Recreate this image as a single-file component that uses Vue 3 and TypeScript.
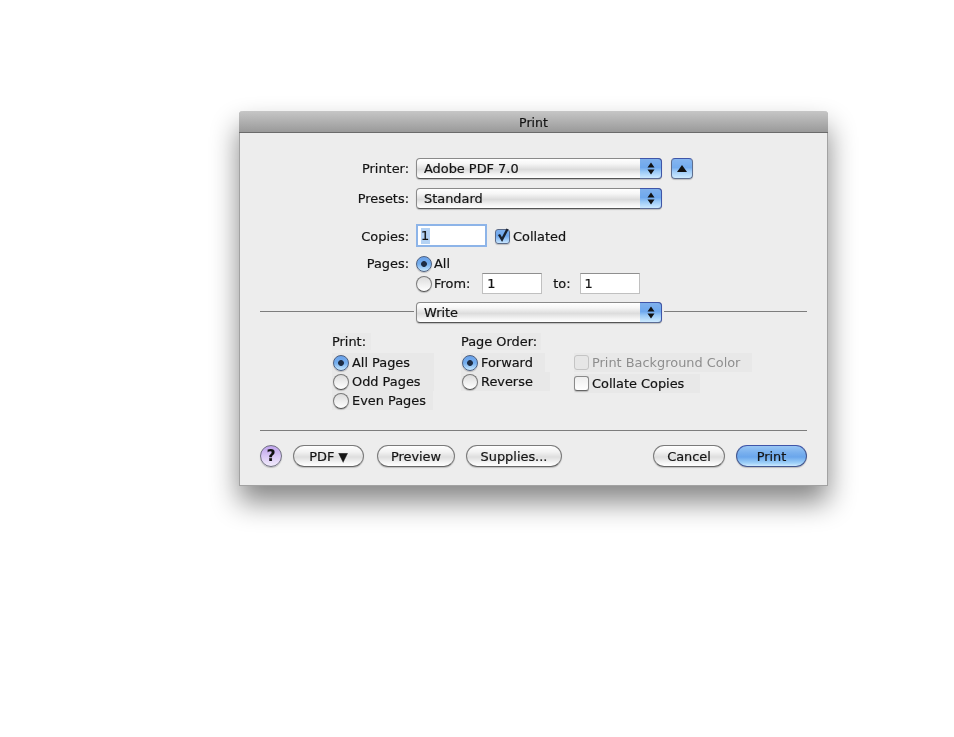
<script setup lang="ts">
const printOptions = [
  { label: 'All Pages', checked: true, width: 102 },
  { label: 'Odd Pages', checked: false, width: 102 },
  { label: 'Even Pages', checked: false, width: 101 },
]
const orderOptions = [
  { label: 'Forward', checked: true, width: 84 },
  { label: 'Reverse', checked: false, width: 89 },
]
</script>

<template>
  <div class="page">
    <div class="window">
      <div class="inner">
        <div class="titlebar">Print</div>
        <div class="body">
          <div class="form">
            <div class="row printer-row">
              <span class="label">Printer:</span>
              <div class="select">
                <span class="select-text">Adobe PDF 7.0</span>
                <span class="stepper">
                  <svg width="8" height="13" viewBox="0 0 8 13"><path d="M4 .5 7.500 5.500H.5zM.5 7.500h7L4 12.500z" fill="#111" /></svg>
                </span>
              </div>
              <span class="disclosure">
                <svg width="10" height="7" viewBox="0 0 10 7"><path d="M5 0 10 7H0z" fill="#111" /></svg>
              </span>
            </div>
            <div class="row presets-row">
              <span class="label">Presets:</span>
              <div class="select">
                <span class="select-text">Standard</span>
                <span class="stepper">
                  <svg width="8" height="13" viewBox="0 0 8 13"><path d="M4 .5 7.500 5.500H.5zM.5 7.500h7L4 12.500z" fill="#111" /></svg>
                </span>
              </div>
            </div>
            <div class="row copies-row">
              <span class="label">Copies:</span>
              <div class="focus-input"><span class="selected-text">1</span></div>
              <span class="checkbox checked">
                <svg width="15" height="15" viewBox="0 0 15 15"><path d="M4 6.500 7 11.500 12.500 1" fill="none" stroke="#1a2230" stroke-width="2.400" /></svg>
              </span>
              <span class="text collated">Collated</span>
            </div>
            <div class="row pages-row">
              <span class="label">Pages:</span>
              <span class="radio on"></span>
              <span class="text">All</span>
            </div>
            <div class="row from-row">
              <span class="label"></span>
              <span class="radio"></span>
              <span class="text">From:</span>
              <div class="num-input first">1</div>
              <span class="text to">to:</span>
              <div class="num-input">1</div>
            </div>
          </div>

          <div class="split-row">
            <span class="rule rule-left"></span>
            <div class="select">
              <span class="select-text">Write</span>
              <span class="stepper">
                <svg width="8" height="13" viewBox="0 0 8 13"><path d="M4 .5 7.500 5.500H.5zM.5 7.500h7L4 12.500z" fill="#111" /></svg>
              </span>
            </div>
            <span class="rule rule-right"></span>
          </div>

          <div class="options">
            <div class="col col-print">
              <div class="heading heading-print">Print:</div>
              <div v-for="o in printOptions" :key="o.label" class="opt" :style="{ width: o.width + 'px' }">
                <span class="radio" :class="{ on: o.checked }"></span>
                <span class="text">{{ o.label }}</span>
              </div>
            </div>
            <div class="col col-order">
              <div class="heading heading-order">Page Order:</div>
              <div v-for="o in orderOptions" :key="o.label" class="opt" :style="{ width: o.width + 'px' }">
                <span class="radio" :class="{ on: o.checked }"></span>
                <span class="text">{{ o.label }}</span>
              </div>
            </div>
            <div class="col col-check">
              <div class="opt check-opt disabled">
                <span class="checkbox plain"></span>
                <span class="text">Print Background Color</span>
              </div>
              <div class="opt check-opt second">
                <span class="checkbox plain"></span>
                <span class="text">Collate Copies</span>
              </div>
            </div>
          </div>

          <div class="rule bottom-rule"></div>

          <div class="buttons">
            <span class="help">?</span>
            <button class="btn pdf">PDF <span class="tri">▼</span></button>
            <button class="btn preview">Preview</button>
            <button class="btn supplies">Supplies...</button>
            <span class="spacer"></span>
            <button class="btn cancel">Cancel</button>
            <button class="btn print">Print</button>
          </div>
        </div>
      </div>
    </div>
  </div>
</template>

<style scoped>
.page {
  box-sizing: border-box;
  height: 737px;
  padding: 111px 0 0 239px;
}
.window {
  box-sizing: border-box;
  width: 589px;
  height: 375px;
  border-radius: 4px 4px 0 0;
  background: #ededed;
  box-shadow: 0 16px 28px rgba(0, 0, 0, .48);
}
.inner {
  box-sizing: border-box;
  height: 100%;
  border: 1px solid #a2a2a2;
  border-top: none;
  border-radius: 4px 4px 0 0;
  font-family: "DejaVu Sans", sans-serif;
  font-size: 12.900px;
  color: #141414;
  -webkit-text-stroke: .2px #141414;
  filter: blur(.45px);
}
.titlebar {
  box-sizing: border-box;
  height: 22px;
  line-height: 23px;
  margin: 0 -1px;
  text-align: center;
  font-size: 12.500px;
  border-radius: 4px 4px 0 0;
  border-bottom: 1px solid #6b6b6b;
  background: linear-gradient(#c6c6c6, #9a9a9a);
}
.body {
  padding: 25px 20px 0;
}
.form {
  margin-left: -20px;
}
.row {
  display: flex;
  align-items: center;
}
.label {
  width: 169px;
  margin-right: 7px;
  text-align: right;
  flex: none;
}
.printer-row { height: 21px; }
.presets-row { height: 21px; margin-top: 9px; }
.copies-row { height: 23px; margin-top: 15px; }
.copies-row .label, .collated { padding-top: 2px; }
.pages-row { height: 17px; margin-top: 8px; }
.from-row { height: 21px; margin-top: 1px; }
.select {
  box-sizing: border-box;
  flex: none;
  width: 246px;
  height: 21px;
  display: flex;
  align-items: center;
  border: 1px solid #8a8a8a;
  border-bottom-color: #555;
  border-radius: 4px;
  box-shadow: 0 1px 1px rgba(0, 0, 0, .2);
  background: linear-gradient(#fff 0, #f6f6f6 25%, #dcdcdc 55%, #f2f2f2 80%, #fff 100%);
}
.select-text {
  flex: 1;
  padding-left: 7px;
}
.stepper {
  box-sizing: border-box;
  width: 22px;
  height: 21px;
  margin: -1px -1px -1px 0;
  border: 1px solid #3f55a8;
  border-left: none;
  border-bottom-color: #5b6c94;
  border-radius: 0 4px 4px 0;
  display: flex;
  align-items: center;
  justify-content: center;
  background: linear-gradient(#7fb0ec 0, #6ea8ee 45%, #98c8f6 65%, #cdeaff 100%);
}
.disclosure {
  box-sizing: border-box;
  width: 22px;
  height: 21px;
  margin-left: 9px;
  border: 1px solid #5f6f8f;
  border-top-color: #3f55a8;
  border-radius: 4px;
  box-shadow: 0 1px 1px rgba(0, 0, 0, .2);
  display: flex;
  align-items: center;
  justify-content: center;
  background: linear-gradient(#86b6f0 0, #74acee 45%, #a0ccf8 65%, #cdeaff 100%);
}
.focus-input {
  box-sizing: border-box;
  width: 71px;
  height: 23px;
  padding: 2px 0 0 3px;
  background: #fff;
  border: 2px solid #8db4e8;
  line-height: 16px;
}
.selected-text {
  display: inline-block;
  width: 9px;
  background: #b4d2f4;
}
.checkbox {
  box-sizing: border-box;
  flex: none;
  width: 15px;
  height: 15px;
  border: 1px solid #8a8a8a;
  border-bottom-color: #666;
  border-radius: 3px;
  box-shadow: 0 1px 1px rgba(0, 0, 0, .2);
  background: linear-gradient(#eeeeee, #fff);
  display: inline-block;
}
.checkbox.checked {
  margin: 1px 0 0 8px;
  background: linear-gradient(#7fb0ec, #6ea8ee 45%, #c8e6fe);
  border-color: #5a6a88;
}
.checkbox svg {
  display: block;
  margin: -2px 0 0 -1px;
}
.text {
  white-space: nowrap;
}
.collated { margin-left: 3px; }
.radio {
  box-sizing: border-box;
  flex: none;
  width: 16px;
  height: 16px;
  border-radius: 50%;
  border: 1px solid #7a7a7a;
  border-bottom-color: #555;
  box-shadow: 0 1px 1px rgba(0, 0, 0, .2);
  background: linear-gradient(#dcdcdc, #fff);
  margin-right: 3px;
}
.row .radio { margin-right: 2px; }
.radio.on {
  border-color: #4c5f80;
  background: radial-gradient(circle, #1d2c44 0 2.500px, transparent 3.300px), linear-gradient(#6aa2ea, #74aeee 50%, #c8e8fe);
}
.num-input {
  box-sizing: border-box;
  width: 60px;
  height: 21px;
  padding-left: 4px;
  line-height: 20px;
  background: #fff;
  border: 1px solid #c0c0c0;
  border-top-color: #8f8f8f;
}
.first { margin-left: 12px; }
.to { margin: 0 9px 0 11px; }
.split-row {
  display: flex;
  align-items: center;
  margin-top: 8px;
  gap: 2px;
}
.rule {
  height: 1px;
  background: #7d7d7d;
}
.split-row .rule { margin-bottom: 2px; }
.rule-right { flex: 1; }
.rule-left {
  flex: none;
  width: 154px;
}
.options {
  display: flex;
  margin-top: 10px;
  margin-left: 72px;
  height: 97px;
}
.col-print { width: 129px; flex: none; }
.col-order { width: 113px; flex: none; }
.heading {
  height: 17px;
  line-height: 17px;
  margin-bottom: 3px;
  background: #e9e9e9;
}
.heading-print { width: 39px; }
.heading-order { width: 80px; }
.opt {
  box-sizing: border-box;
  height: 19px;
  padding-left: 1px;
  display: flex;
  align-items: center;
  background: #e8e8e8;
}
.check-opt {
  width: max-content;
  padding-left: 0;
  padding-right: 12px;
}
.col-check {
  padding-top: 20px;
}
.check-opt .checkbox {
  margin-right: 3px;
}
.second { margin-top: 2px; padding-right: 16px; }
.disabled { color: #8e8e8e; -webkit-text-stroke: 0; }
.disabled .checkbox {
  border-color: #c4c4c4;
  box-shadow: none;
  background: #e6e6e6;
}
.buttons {
  display: flex;
  align-items: center;
  margin-top: 14px;
}
.help {
  box-sizing: border-box;
  width: 22px;
  height: 22px;
  border-radius: 50%;
  border: 1px solid #6f6f80;
  box-shadow: 0 1px 1px rgba(0, 0, 0, .2);
  background: linear-gradient(#bfa2ec, #d8c6f4 50%, #f2ecfc);
  display: flex;
  align-items: center;
  justify-content: center;
  font-weight: 700;
  font-size: 15px;
  color: #111;
}
.btn {
  box-sizing: border-box;
  flex: none;
  height: 22px;
  padding: 0;
  font: inherit;
  color: inherit;
  -webkit-text-stroke: inherit;
  border: 1px solid #7a7a7a;
  border-bottom-color: #666;
  border-radius: 11px;
  box-shadow: 0 1px 1px rgba(0, 0, 0, .2);
  background: linear-gradient(#fff 0, #f2f2f2 30%, #dedede 55%, #f6f6f6 85%, #fff 100%);
}
.tri { font-size: 12px; }
.pdf { width: 71px; margin-left: 11px; }
.preview { width: 78px; margin-left: 13px; }
.supplies { width: 96px; margin-left: 11px; }
.spacer { flex: 1; }
.cancel { width: 72px; }
.print {
  width: 71px;
  margin-left: 11px;
  border-color: #43578f;
  border-top-color: #3f55a8;
  background: linear-gradient(#98c6f4 0, #78afee 35%, #6aa6ec 55%, #9ed0f8 85%, #cdeaff 100%);
}
</style>

<style>
body {
  background: #fff;
}
</style>
